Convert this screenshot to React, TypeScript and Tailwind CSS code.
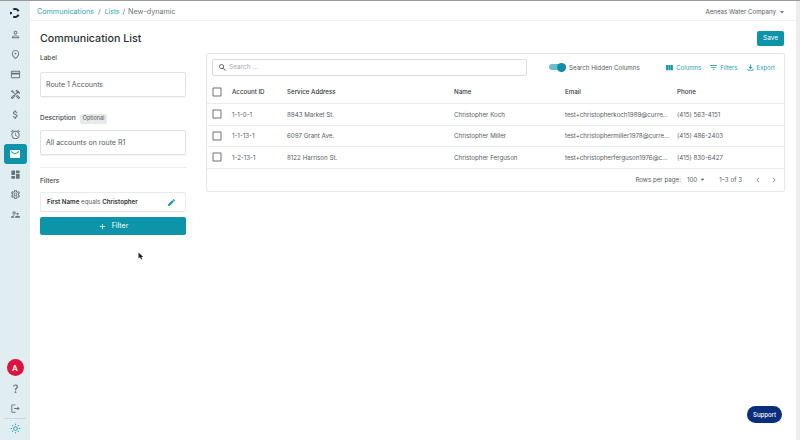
import React from 'react';
import {
  MdAdd,
  MdArrowDropDown,
  MdAttachMoney,
  MdChevronLeft,
  MdChevronRight,
  MdCheckBoxOutlineBlank,
  MdCreditCard,
  MdDashboard,
  MdEdit,
  MdEmail,
  MdFilterList,
  MdOutlineAlarm,
  MdOutlineFileDownload,
  MdOutlineHandyman,
  MdOutlineLightMode,
  MdOutlineLogout,
  MdOutlinePerson,
  MdOutlinePlace,
  MdOutlineSettings,
  MdOutlineSupervisorAccount,
  MdQuestionMark,
  MdSearch,
  MdViewColumn,
} from 'react-icons/md';

const NAV_ICONS = [
  MdOutlinePerson,
  MdOutlinePlace,
  MdCreditCard,
  MdOutlineHandyman,
  MdAttachMoney,
  MdOutlineAlarm,
];

const ROWS = [
  {
    id: '1-1-0-1',
    address: '8943 Market St.',
    name: 'Christopher Koch',
    email: 'test+christopherkoch1989@curre...',
    phone: '(415) 563-4151',
  },
  {
    id: '1-1-13-1',
    address: '6097 Grant Ave.',
    name: 'Christopher Miller',
    email: 'test+christophermiller1978@curre...',
    phone: '(415) 486-2403',
  },
  {
    id: '1-2-13-1',
    address: '8122 Harrison St.',
    name: 'Christopher Ferguson',
    email: 'test+christopherferguson1976@c...',
    phone: '(415) 830-6427',
  },
];

const Logo = () => (
  <svg width="12" height="12" viewBox="0 0 12 12" fill="none" stroke="#1c262c" strokeWidth="2">
    <path d="M4.2 2.4A4 4 0 0 1 9.6 4.2" />
    <path d="M9.6 7.8A4 4 0 0 1 4.2 9.6" />
    <path d="M2.1 4.9A4 4 0 0 0 2.1 7.1" />
  </svg>
);

const Sidebar = () => (
  <aside className="w-[30px] shrink-0 bg-[#e0edf1] flex flex-col items-center">
    <div className="h-[23px] pt-[1px] flex items-center justify-center">
      <Logo />
    </div>
    <div className="flex flex-col items-center w-full">
      {NAV_ICONS.map((Icon, idx) => (
        <div key={idx} className="h-[20px] flex items-center justify-center text-[#66757c]">
          <Icon size={11} />
        </div>
      ))}
      <div className="w-[23px] h-[20px] rounded-[3px] bg-[#0e94a8] flex items-center justify-center text-white">
        <MdEmail size={12} />
      </div>
      <div className="h-[20px] flex items-center justify-center text-[#66757c]">
        <MdDashboard size={11} />
      </div>
      <div className="h-[20px] flex items-center justify-center text-[#66757c]">
        <MdOutlineSettings size={11} />
      </div>
      <div className="h-[20px] flex items-center justify-center text-[#66757c]">
        <MdOutlineSupervisorAccount size={11} />
      </div>
    </div>
    <div className="mt-auto flex flex-col items-center w-full pb-[2px]">
      <div className="w-[17px] h-[17px] rounded-full bg-[#dc143c] text-white text-[8px] font-semibold flex items-center justify-center">
        A
      </div>
      <div className="h-[22px] mt-[1px] flex items-center justify-center text-[#66757c]">
        <MdQuestionMark size={11} />
      </div>
      <div className="h-[19px] flex items-center justify-center text-[#66757c]">
        <MdOutlineLogout size={11} />
      </div>
      <div className="w-[22px] border-t border-[#c8d6da] h-[20px] flex items-center justify-center text-[#2ba6bb]">
        <MdOutlineLightMode size={11} />
      </div>
    </div>
  </aside>
);

const Field = ({ value }: { value: string }) => (
  <div className="h-[25px] border border-[#dfe3e5] rounded-[2px] flex items-center px-[5px] pt-[1px] text-[7px] text-[#555c60] shadow-[0_1px_1px_rgba(0,0,0,0.05)]">
    {value}
  </div>
);

const LeftPanel = () => (
  <div className="w-[146px] shrink-0 flex flex-col">
    <h1 className="text-[10.7px] leading-[14px] font-medium text-[#2c3134] mt-[11px]">Communication List</h1>
    <div className="text-[6.5px] leading-[10px] text-[#444a4e] mt-[7px] font-medium">Label</div>
    <div className="mt-[9px]">
      <Field value="Route 1 Accounts" />
    </div>
    <div className="flex items-center gap-[4px] mt-[16px] h-[11px]">
      <span className="text-[6.5px] text-[#444a4e] font-medium">Description</span>
      <span className="bg-[#e6e8e9] rounded-[2px] px-[3px] h-[10px] flex items-center text-[5.5px] text-[#555c60]">Optional</span>
    </div>
    <div className="mt-[6px]">
      <Field value="All accounts on route R1" />
    </div>
    <div className="border-t border-[#ebeeef] mt-[12px]" />
    <div className="text-[6.5px] leading-[10px] text-[#444a4e] font-medium mt-[8px]">Filters</div>
    <div className="mt-[6px] h-[20px] border border-[#e8ebec] border-b-[#dfe3e5] rounded-[2px] flex items-center justify-between pl-[6px] pr-[9px]">
      <span className="text-[6.2px] text-[#555c60]">
        <b className="font-semibold text-[#2c3134]">First Name</b> equals <b className="font-semibold text-[#2c3134]">Christopher</b>
      </span>
      <MdEdit size={9} className="text-[#0e94a8]" />
    </div>
    <button className="mt-[5px] h-[18px] rounded-[2px] bg-[#0e94a8] text-white text-[7px] flex items-center justify-center gap-[5px]">
      <MdAdd size={9} />
      Filter
    </button>
  </div>
);

const ActionLink = ({ icon: Icon, label }: { icon: typeof MdFilterList; label: string }) => (
  <span className="flex items-center gap-[2px] text-[6px] text-[#2ba3b6]">
    <Icon size={9} className="text-[#0e94a8]" />
    <span className="pt-[1px]">{label}</span>
  </span>
);

const Checkbox = () => <MdCheckBoxOutlineBlank size={12} className="text-[#6f7376]" />;

const rowClass = 'grid grid-cols-[21px_55px_167px_111px_112px_1fr] items-center pl-[4px] text-[6.2px] text-[#555c60]';

const DataCard = () => (
  <div className="border border-[#e6e9ea] rounded-[2px]">
    <div className="h-[28px] flex items-center pl-[5px] pr-[9px] pb-[2px]">
      <div className="w-[315px] h-[17px] border border-[#d9dddf] rounded-[2px] flex items-center gap-[2px] px-[5px] text-[6.5px] text-[#a4a9ac]">
        <MdSearch size={9} className="text-[#444a4e]" />
        <span className="pt-[2px]">Search ...</span>
      </div>
      <div className="ml-[22px] relative w-[17px] h-[6px] rounded-full bg-[#6cbdca]">
        <span className="absolute right-0 top-[-1.5px] w-[9px] h-[9px] rounded-full bg-[#0e8ea3]" />
      </div>
      <span className="ml-[3px] pt-[1px] text-[6.2px] text-[#555c60]">Search Hidden Columns</span>
      <div className="ml-auto flex items-center gap-[8px]">
        <ActionLink icon={MdViewColumn} label="Columns" />
        <ActionLink icon={MdFilterList} label="Filters" />
        <ActionLink icon={MdOutlineFileDownload} label="Export" />
      </div>
    </div>
    <div className={`${rowClass} h-[22px] border-b border-[#e9ecec] pb-[1px] font-medium text-[#33383b]`}>
      <Checkbox />
      <span>Account ID</span>
      <span>Service Address</span>
      <span>Name</span>
      <span>Email</span>
      <span>Phone</span>
    </div>
    {ROWS.map((row) => (
      <div key={row.id} className={`${rowClass} h-[21.6px] border-b border-[#e9ecec]`}>
        <Checkbox />
        <span>{row.id}</span>
        <span>{row.address}</span>
        <span>{row.name}</span>
        <span className="whitespace-nowrap">{row.email}</span>
        <span>{row.phone}</span>
      </div>
    ))}
    <div className="h-[22px] flex items-center justify-end gap-[11px] pr-[5px] text-[6.2px] text-[#555c60]">
      <span className="mr-[-5px]">Rows per page:</span>
      <span className="flex items-center gap-[1px]">
        100
        <MdArrowDropDown size={9} />
      </span>
      <span className="ml-[1px]">1–3 of 3</span>
      <span className="flex items-center gap-[6px] text-[#8e9497]">
        <MdChevronLeft size={10} />
        <MdChevronRight size={10} />
      </span>
    </div>
  </div>
);

export default function App() {
  return (
    <div className="relative w-[800px] h-[440px] overflow-hidden flex bg-white font-['Inter',sans-serif] border-t border-[#9a9a9a]">
      <Sidebar />
      <main className="flex-1 flex flex-col min-w-0 border-r-[4px] border-[#eceeee]">
        <header className="h-[20px] shrink-0 border-b border-[#eef0f1] flex items-center pl-[7px] pr-[9px] pt-[3px] text-[7.2px] text-[#6d7376]">
          <span className="text-[#2ba3b6]">Communications</span>
          <span className="mx-[4px]">/</span>
          <span className="text-[#2ba3b6] text-[6.8px]">Lists</span>
          <span className="mx-[3px]">/</span>
          <span>New-dynamic</span>
          <span className="ml-auto flex items-center gap-[1px] text-[6.2px] text-[#555c60]">
            Aeneas Water Company
            <MdArrowDropDown size={10} />
          </span>
        </header>
        <div className="flex-1 flex pl-[10px] pr-[11px] gap-[20px]">
          <LeftPanel />
          <div className="flex-1 min-w-0 flex flex-col">
            <div className="flex justify-end mt-[10px] mb-[7px]">
              <button className="w-[27px] h-[15px] mr-[1px] rounded-[2px] bg-[#0e94a8] text-white text-[6.5px]">Save</button>
            </div>
            <DataCard />
          </div>
        </div>
      </main>
      <button className="absolute left-[747px] top-[405px] w-[35px] h-[17px] rounded-full bg-[#0a2d7c] text-white text-[6px] font-medium">
        Support
      </button>
      <svg className="absolute left-[138px] top-[251px]" width="6" height="8" viewBox="0 0 6 8">
        <path d="M0.5 0.5V6.5L2 5.2L3.2 7.5L4.3 7L3.2 4.9H5.2Z" fill="#222" />
      </svg>
    </div>
  );
}
